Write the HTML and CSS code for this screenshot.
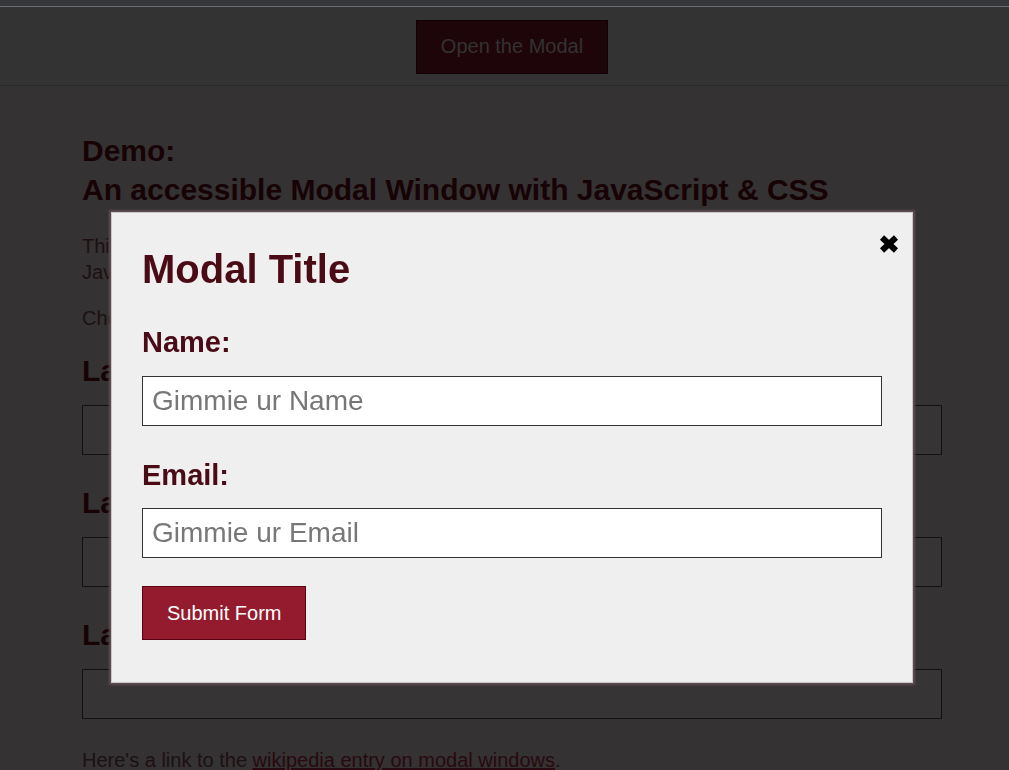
FILE: index.html
```html
<!DOCTYPE html>
<html lang="en">
<head>
<meta charset="utf-8">
<title>Accessible Modal Demo</title>
<link rel="stylesheet" href="styles.css">
</head>
<body>
<div class="topstrip"></div>
<header class="site-header">
  <button class="btn btn-open" type="button">Open the Modal</button>
</header>
<main class="content">
  <h2 class="demo-title">Demo:<br>An accessible Modal Window with JavaScript &amp; CSS</h2>
  <p class="text">This is a demo of an accessible modal window, made with nothing more than plain<br>JavaScript and a little CSS.</p>
  <p class="text">Check out the source code to see how it works.</p>
  <div class="field">
    <label class="field-label">Label One:</label>
    <div class="field-box"></div>
  </div>
  <div class="field">
    <label class="field-label">Label Two:</label>
    <div class="field-box"></div>
  </div>
  <div class="field">
    <label class="field-label">Label Three:</label>
    <div class="field-box"></div>
  </div>
  <p class="text">Here's a link to the <a class="link" href="#">wikipedia entry on modal windows</a>.</p>
</main>

<div class="modal" role="dialog" aria-labelledby="modal-title">
  <button class="modal-close" type="button" aria-label="Close">
    <svg width="22" height="20" viewBox="0 0 22 20" aria-hidden="true">
      <line x1="4" y1="3.5" x2="18" y2="16.5" stroke="#000" stroke-width="6"/>
      <line x1="18" y1="3.5" x2="4" y2="16.5" stroke="#000" stroke-width="6"/>
    </svg>
  </button>
  <h1 class="modal-title" id="modal-title">Modal Title</h1>
  <form class="modal-form">
    <label class="modal-label" for="name">Name:</label>
    <input class="modal-input" id="name" type="text" placeholder="Gimmie ur Name">
    <label class="modal-label" for="email">Email:</label>
    <input class="modal-input" id="email" type="email" placeholder="Gimmie ur Email">
    <button class="btn btn-submit" type="button">Submit Form</button>
  </form>
</div>
</body>
</html>
```

FILE: styles.css
```css
* { box-sizing: border-box; }

html, body {
  margin: 0;
  padding: 0;
  overflow: hidden;
}

body {
  background: #343233;
  font-family: "Liberation Sans", Arial, sans-serif;
  font-size: 20px;
  line-height: 1.3;
  color: #1c1012;
  height: 770px;
}

.topstrip {
  height: 7px;
  background: #36373b;
  border-bottom: 1px solid #6e6d72;
}

.site-header {
  height: 79px;
  background: #333333;
  border-bottom: 1px solid #2a2929;
  display: flex;
  justify-content: center;
  align-items: center;
  padding-left: 15px;
  padding-top: 1px;
}

.btn {
  font-family: "Liberation Sans", Arial, sans-serif;
  font-size: 20px;
  line-height: 23px;
  padding: 14.5px 24px;
  cursor: pointer;
}

.btn-open {
  background: #1e0509;
  border: 1px solid #0e0204;
  color: #333233;
}

.content {
  padding: 45px 67px 0 82px;
}

.demo-title {
  margin: 0 0 24px;
  font-size: 30px;
  line-height: 39px;
  font-weight: bold;
  color: #170305;
}

.text {
  margin: 0 0 20px;
  font-size: 20px;
  line-height: 26px;
}

.field {
  margin-bottom: 28px;
}

.text + .field {
  margin-top: 20px;
}

.field-label {
  display: block;
  font-size: 30px;
  line-height: 39px;
  font-weight: bold;
  color: #170305;
  margin-bottom: 15px;
}

.field-box {
  height: 50px;
  border: 1px solid #121112;
  background: #363435;
}

.link {
  color: #28090f;
  text-decoration: underline;
}

.modal {
  position: fixed;
  left: 111px;
  top: 212px;
  width: 802px;
  background: #efefef;
  border: 1px solid #cac6c7;
  box-shadow: 0 0 2px 2px #5f4e51;
  padding: 30px 30px 42px;
}

.modal-close {
  position: absolute;
  top: 21px;
  right: 12px;
  width: 22px;
  height: 20px;
  padding: 0;
  border: 0;
  background: transparent;
  display: flex;
  cursor: pointer;
}

.modal-title {
  margin: 0 0 26px;
  font-size: 40px;
  line-height: 52px;
  font-weight: bold;
  color: #4a0b16;
}

.modal-form {
  display: flex;
  flex-direction: column;
  align-items: flex-start;
}

.modal-label {
  font-size: 29px;
  line-height: 37.7px;
  font-weight: bold;
  color: #4a0b16;
  margin-top: 3px;
  margin-bottom: 14px;
}

.modal-input {
  width: 100%;
  height: 50px;
  border: 1px solid #333;
  background: #fff;
  padding: 0 9px;
  font-family: "Liberation Sans", Arial, sans-serif;
  font-size: 28px;
  color: #333;
  margin-bottom: 28px;
  outline: none;
}

.modal-input::placeholder {
  color: #777;
}

.btn-submit {
  background: #931b2d;
  border: 1px solid #5a0012;
  color: #ffffff;
}
```
